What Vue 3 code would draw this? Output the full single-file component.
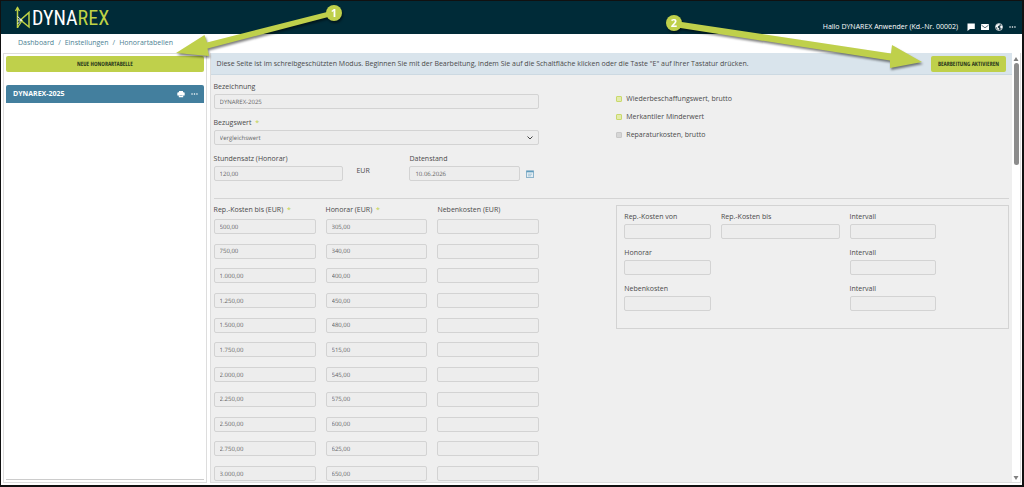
<script setup>
import { ref, reactive } from 'vue'

const name = ref('DYNAREX-2025')
const reference = ref('Vergleichswert')
const hourlyRate = ref('120,00')
const date = ref('10.06.2026')
const locked = ref(true)

const options = reactive([
  { id: 'wbw', label: 'Wiederbeschaffungswert, brutto', checked: true },
  { id: 'minderwert', label: 'Merkantiler Minderwert', checked: true },
  { id: 'reparatur', label: 'Reparaturkosten, brutto', checked: false },
])

const rows = reactive([
  { limit: '500,00', fee: '305,00', extra: '' },
  { limit: '750,00', fee: '340,00', extra: '' },
  { limit: '1.000,00', fee: '400,00', extra: '' },
  { limit: '1.250,00', fee: '450,00', extra: '' },
  { limit: '1.500,00', fee: '480,00', extra: '' },
  { limit: '1.750,00', fee: '515,00', extra: '' },
  { limit: '2.000,00', fee: '545,00', extra: '' },
  { limit: '2.250,00', fee: '575,00', extra: '' },
  { limit: '2.500,00', fee: '600,00', extra: '' },
  { limit: '2.750,00', fee: '625,00', extra: '' },
  { limit: '3.000,00', fee: '650,00', extra: '' },
])

const generator = reactive([
  { id: 'from', label: 'Rep.-Kosten von', value: '' },
  { id: 'to', label: 'Rep.-Kosten bis', value: '' },
  { id: 'step', label: 'Intervall', value: '' },
  { id: 'fee', label: 'Honorar', value: '' },
  { id: 'fee-step', label: 'Intervall', value: '', last: true },
  { id: 'extra', label: 'Nebenkosten', value: '' },
  { id: 'extra-step', label: 'Intervall', value: '', last: true },
])
</script>

<template>
  <div class="page">
    <header class="topbar">
      <a class="logo" href="#">
        <svg class="logo-mark" viewBox="0 0 16 24" fill="none">
          <path d="M2.500 1.500V22" stroke="#bfd245" stroke-width="1.500" />
          <path d="M0.500 5L2.500 1.500L4.500 5" stroke="#bfd245" stroke-width="1.300" />
          <path d="M2.500 21.500L7.500 14" stroke="#bfd245" stroke-width="1.300" />
          <path d="M5.500 14L14 6.500V21z" stroke="#bfd245" stroke-width="1.500" />
          <path d="M2.500 10.500L6.500 14L2.500 18M2.500 14H7" stroke="#ffffff" stroke-width="0.900" />
        </svg>
        <span class="logo-text">DYNA<b>REX</b></span>
      </a>
      <div class="user">
        <span class="hello">Hallo DYNAREX Anwender (Kd.-Nr. 00002)</span>
        <button class="icon-btn" aria-label="Nachrichten">
          <svg viewBox="0 0 8 8"><path d="M0.500 0.500h7.300v5.500H3L0.500 8z" fill="#fff" /></svg>
        </button>
        <button class="icon-btn" aria-label="E-Mail">
          <svg viewBox="0 0 8 8">
            <rect y="1" width="8" height="6" rx="0.600" fill="#fff" />
            <path d="M0.500 2.200L4 4.800L7.500 2.200" fill="none" stroke="#17323d" stroke-width="0.700" />
          </svg>
        </button>
        <button class="icon-btn" aria-label="Sprache">
          <svg viewBox="0 0 8 8">
            <circle cx="4" cy="4" r="3.500" fill="#22404b" stroke="#fff" stroke-width="0.700" />
            <path d="M1 2.500L3 1l2 .2-.6 1.300L3 3l-.3 1.500L4.200 5.500 3.500 7 2.500 6.500 2 4.700.8 3.800zM5.200 2.800L7 2.500l.4 1.800L6 6 5.300 4.600z" fill="#fff" />
          </svg>
        </button>
        <button class="icon-btn" aria-label="Mehr">
          <svg viewBox="0 0 8 8" fill="#fff">
            <circle cx="1.200" cy="4" r="0.900" /><circle cx="4" cy="4" r="0.900" /><circle cx="6.800" cy="4" r="0.900" />
          </svg>
        </button>
      </div>
    </header>

    <nav class="breadcrumb">
      <a href="#">Dashboard</a><span>/</span>
      <a href="#">Einstellungen</a><span>/</span>
      <a href="#">Honorartabellen</a>
    </nav>

    <div class="content">
      <aside class="sidebar">
        <button class="btn">NEUE HONORARTABELLE</button>
        <div class="entry">
          <span>DYNAREX-2025</span>
          <button class="icon-btn" aria-label="Drucken">
            <svg viewBox="0 0 8 8">
              <path d="M2 1h4v1.500H2zM1.300 2.300h5.400a1 1 0 0 1 1 1v2.200H.3V3.300a1 1 0 0 1 1-1zM1.800 5h4.400v2.300H1.800z" fill="#fff" />
              <path d="M2.500 5.500h3" stroke="#437f9e" stroke-width="0.500" />
            </svg>
          </button>
          <button class="icon-btn" aria-label="Mehr">
            <svg viewBox="0 0 8 8" fill="#fff">
              <circle cx="1.200" cy="4" r="0.900" /><circle cx="4" cy="4" r="0.900" /><circle cx="6.800" cy="4" r="0.900" />
            </svg>
          </button>
        </div>
        <div class="sidebar-end"></div>
      </aside>

      <main class="panel">
        <div class="sheet">
          <div class="notice">
            <p>
              Diese Seite ist im schreibgeschützten Modus. Beginnen Sie mit der Bearbeitung, indem Sie auf die
              Schaltfläche klicken oder die Taste "E" auf Ihrer Tastatur drücken.
            </p>
            <button class="btn" @click="locked = false">BEARBEITUNG AKTIVIEREN</button>
          </div>

          <form class="form" @submit.prevent>
            <section class="columns general">
              <div class="fields">
                <div class="field">
                  <label for="name">Bezeichnung</label>
                  <input id="name" v-model="name" type="text" :disabled="locked" />
                </div>
                <div class="field">
                  <label for="reference">Bezugswert <i>*</i></label>
                  <div class="select">
                    <select id="reference" v-model="reference" :disabled="locked">
                      <option>Vergleichswert</option>
                    </select>
                    <svg viewBox="0 0 8 6"><path d="M1.500 1.500L4 4L6.500 1.500" /></svg>
                  </div>
                </div>
                <div class="split">
                  <div class="field">
                    <label for="rate">Stundensatz (Honorar)</label>
                    <input id="rate" v-model="hourlyRate" type="text" :disabled="locked" />
                  </div>
                  <span class="unit">EUR</span>
                  <div class="field">
                    <label for="date">Datenstand</label>
                    <input id="date" v-model="date" type="text" :disabled="locked" />
                  </div>
                  <button class="calendar" type="button" aria-label="Datum wählen" :disabled="locked">
                    <svg viewBox="0 0 8 8">
                      <rect x="0.500" y="1" width="7" height="6.500" fill="#e3edf3" stroke="#8db4cb" />
                      <path d="M0.500 1.500h7" stroke="#5f9cbd" stroke-width="1.600" />
                      <path d="M2 4.200h4M2 5.800h3" stroke="#8db4cb" stroke-width="0.700" />
                    </svg>
                  </button>
                </div>
              </div>

              <div class="checks">
                <label v-for="option in options" :key="option.id">
                  <input v-model="option.checked" type="checkbox" :disabled="locked" />
                  {{ option.label }}
                </label>
              </div>
            </section>

            <section class="columns rates">
              <table>
                <thead>
                  <tr>
                    <th>Rep.-Kosten bis (EUR) <i>*</i></th>
                    <th>Honorar (EUR) <i>*</i></th>
                    <th>Nebenkosten (EUR)</th>
                  </tr>
                </thead>
                <tbody>
                  <tr v-for="(row, index) in rows" :key="index">
                    <td><input v-model="row.limit" type="text" aria-label="Rep.-Kosten bis" :disabled="locked" /></td>
                    <td><input v-model="row.fee" type="text" aria-label="Honorar" :disabled="locked" /></td>
                    <td><input v-model="row.extra" type="text" aria-label="Nebenkosten" :disabled="locked" /></td>
                  </tr>
                </tbody>
              </table>

              <div class="generator">
                <div v-for="item in generator" :key="item.id" class="field" :class="{ last: item.last }">
                  <label :for="item.id">{{ item.label }}</label>
                  <input :id="item.id" v-model="item.value" type="text" :disabled="locked" />
                </div>
              </div>
            </section>
          </form>
        </div>

        <div class="scrollbar">
          <svg viewBox="0 0 6 6"><path d="M3 1L5.500 5H0.500z" /></svg>
          <div class="track"><div class="thumb"></div></div>
          <svg viewBox="0 0 6 6"><path d="M3 5L5.500 1H0.500z" /></svg>
        </div>
      </main>
    </div>

    <svg class="callout first" viewBox="0 0 172 60">
      <path d="M158 10L34 41.500L31.500 34L3 52L36 55L34.500 47.500L159 15z" />
      <circle cx="161" cy="12" r="8" />
      <text x="161" y="16">1</text>
    </svg>
    <svg class="callout second" viewBox="0 0 264 60">
      <path d="M16 6L232 38.500L233 30L263 47L231 53L231 45.500L15 12z" />
      <circle cx="15" cy="8" r="8" />
      <text x="15" y="12">2</text>
    </svg>
  </div>
</template>

<style>
body {
  background: #111;
}
</style>

<style scoped>
* {
  box-sizing: border-box;
}

.page {
  position: relative;
  display: flex;
  flex-direction: column;
  min-height: 100vh;
  background: #fff;
  border: 1px solid #111;
  border-right-width: 2px;
  border-bottom-width: 2px;
  padding-bottom: 2px;
  font-family: 'Open Sans', 'Noto Sans', sans-serif;
  font-size: 7px;
  line-height: 10px;
  color: #4a4a4a;
}

button,
input,
select {
  margin: 0;
  font-family: inherit;
  font-size: inherit;
  line-height: inherit;
  text-rendering: geometricPrecision;
}

i {
  margin-left: 2px;
  font-style: normal;
  color: #bfd245;
}

.topbar {
  display: flex;
  justify-content: space-between;
  height: 33px;
  padding: 3px 6px 0 14px;
  background: #002b38;
}

.logo {
  display: flex;
  align-items: center;
  gap: 1px;
  height: 28px;
  color: #fff;
  text-decoration: none;
}

.logo-mark {
  width: 16px;
  height: 24px;
}

.logo-text {
  font-family: 'Roboto Condensed', 'Open Sans Condensed', 'Liberation Sans Narrow', sans-serif;
  font-size: 20px;
  font-weight: 400;
  line-height: 24px;
}

.logo-text b {
  font-weight: inherit;
  color: #bfd245;
}

.user {
  display: flex;
  align-items: center;
  align-self: flex-end;
  height: 14px;
  gap: 6px;
  color: #fff;
}

.hello {
  margin-right: 3px;
}

.icon-btn {
  display: flex;
  padding: 0;
  background: none;
  border: none;
  cursor: pointer;
}

.icon-btn svg {
  width: 8px;
  height: 8px;
}

.icon-btn:last-child svg {
  width: 7px;
}

.breadcrumb {
  display: flex;
  gap: 4px;
  padding: 4px 17px 5px;
  color: #4d7f94;
}

.breadcrumb a {
  color: inherit;
  text-decoration: none;
}

.content {
  flex: 1;
  display: flex;
  gap: 3px;
  padding: 0 1px 0 2px;
}

.sidebar {
  display: flex;
  flex-direction: column;
  width: 20%;
  padding: 2px;
  border: 1px solid #ddd;
}

.btn {
  height: 16px;
  padding: 0 7px;
  background: #bfd04b;
  border: none;
  border-radius: 2px;
  color: #2b3a1c;
  font-family: 'Open Sans Condensed', 'Roboto Condensed', 'Liberation Sans Narrow', sans-serif;
  font-size: 6px;
  font-weight: 700;
  white-space: nowrap;
  cursor: pointer;
}

.entry {
  display: flex;
  align-items: center;
  gap: 6px;
  height: 18px;
  margin-top: 13px;
  padding: 0 6px 0 7px;
  background: #437f9e;
  border-radius: 2px 2px 0 0;
  color: #fff;
  font-weight: 700;
}

.entry span {
  flex: 1;
}

.sidebar-end {
  margin-top: auto;
  border-bottom: 1px solid #ccc;
}

.panel {
  flex: 1;
  display: flex;
  border: 1px solid #ddd;
  border-top: none;
}

.sheet {
  flex: 1;
  display: flex;
  flex-direction: column;
  background: #efefef;
}

.notice {
  display: flex;
  align-items: center;
  justify-content: space-between;
  height: 22px;
  padding: 0 6px;
  background: #d9e4ec;
  border-bottom: 1px solid #ccd9e2;
}

.notice p {
  margin: 0;
}

.form {
  flex: 1;
  display: flex;
  flex-direction: column;
  padding: 7px 3px 1px;
}

.columns {
  display: grid;
  grid-template-columns: 326fr 393fr;
  column-gap: 77px;
}

.general {
  padding-bottom: 17px;
  border-bottom: 1px solid #d4d4d4;
}

.fields {
  display: flex;
  flex-direction: column;
  gap: 9px;
}

.field {
  display: flex;
  flex-direction: column;
  gap: 2px;
}

input[type='text'],
select {
  width: 100%;
  height: 15px;
  padding: 0 5px;
  background: #ededed;
  border: 1px solid #d3d3d3;
  border-radius: 2px;
  color: #666;
  font-size: 6px;
  appearance: none;
  opacity: 1;
}

.select {
  position: relative;
  display: flex;
}

.select svg {
  position: absolute;
  top: 5px;
  right: 5px;
  width: 8px;
  height: 6px;
  fill: none;
  stroke: #444;
}

.split {
  display: grid;
  grid-template-columns: 130fr 66px 111fr 19px;
}

.unit {
  padding: 12px 0 0 13px;
}

.calendar {
  align-self: end;
  display: flex;
  align-items: center;
  height: 15px;
  padding: 0 0 0 6px;
  background: none;
  border: none;
}

.calendar svg {
  width: 8px;
  height: 8px;
}

.checks {
  display: flex;
  flex-direction: column;
  gap: 8px;
  padding-top: 12px;
}

.checks label {
  display: flex;
  align-items: center;
  gap: 4px;
}

.checks input {
  width: 6px;
  height: 6px;
  margin: 0;
  background: #d6d6d6;
  border: 1px solid #c8c8c8;
  border-radius: 1px;
  appearance: none;
}

.checks input:checked {
  background: #e3ebac;
  border-color: #c9d96c;
}

.rates {
  flex: 1;
  padding-top: 6px;
}

table {
  width: calc(100% + 10px);
  height: 100%;
  table-layout: fixed;
  border-collapse: collapse;
}

th,
td {
  padding: 0 10px 0 0;
  text-align: left;
  vertical-align: bottom;
  font-weight: 400;
}

th {
  height: 10px;
  vertical-align: top;
}

tbody tr:first-child td {
  height: 19px;
}

td input {
  display: block;
}

.generator {
  display: grid;
  grid-template-columns: 87fr 119fr 87fr 56fr;
  column-gap: 10px;
  row-gap: 9px;
  align-self: start;
  padding: 6px 6px 17px 7px;
  border: 1px solid #d3d3d3;
}

.generator .field:nth-child(3),
.generator .last {
  grid-column: 3;
}

.generator .field:nth-child(4),
.generator .field:nth-child(6) {
  grid-column: 1;
}

.scrollbar {
  display: flex;
  flex-direction: column;
  align-items: center;
  width: 8px;
  padding: 3px 0 1px;
}

.scrollbar svg {
  width: 6px;
  height: 6px;
  fill: #808080;
}

.track {
  flex: 1;
  padding-top: 1px;
}

.thumb {
  width: 5px;
  height: 24%;
  min-height: 102px;
  background: #8c8c8c;
  border-radius: 3px;
}

.callout {
  position: absolute;
  height: 60px;
  fill: #bfd04b;
  filter: drop-shadow(1px 2px 1px rgba(0, 0, 0, 0.5));
  pointer-events: none;
}

.callout text {
  fill: #fff;
  font-size: 11px;
  font-weight: 700;
  text-anchor: middle;
}

.first {
  top: 0;
  left: 172px;
  width: 172px;
}

.second {
  top: 14px;
  right: 99px;
  width: 264px;
}
</style>
